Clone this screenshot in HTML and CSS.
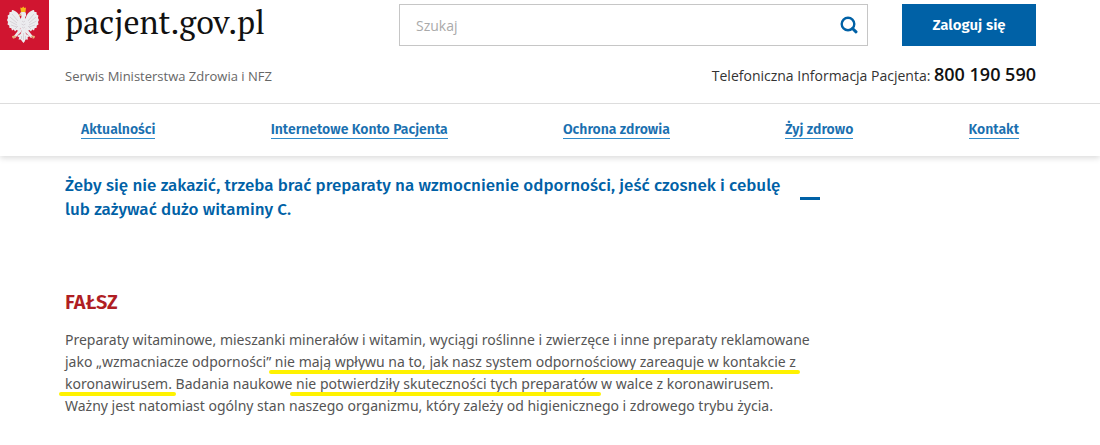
FILE: index.html
```html
<!DOCTYPE html>
<html lang="pl">
<head>
  <meta charset="UTF-8" />
  <title>pacjent.gov.pl</title>
  <meta name="viewport" content="width=device-width, initial-scale=1.0" />
  <link rel="stylesheet" href="styles.css">
</head>
<body>

  <header class="header">
    <div class="top-row">
      <a class="brand" href="#">
        <svg class="emblem" viewBox="0 0 49 50" aria-hidden="true">
          <rect width="49" height="50" fill="#d01530"/>
          <g fill="#ececef">
            <!-- wings -->
            <path d="M20.500 19C19.500 14 16 10.500 12 10L11.500 12L9.500 12L9.300 14.500L7.600 15.500L8 18L7 20L8 22L7.500 24.500L9.200 25.500L9.500 28L11.200 28L12 30.500L13.800 29.500L15 31.500L16.500 30L18.500 31L21 27Z"/>
            <path d="M25.500 19C26.500 14 30 10.500 34 10L34.500 12L36.500 12L36.700 14.500L38.400 15.500L38 18L39 20L38 22L38.500 24.500L36.800 25.500L36.500 28L34.800 28L34 30.500L32.200 29.500L31 31.500L29.500 30L27.500 31L25 27Z"/>
            <!-- head and body -->
            <path d="M20.500 12.500L23 11.500L25.800 12.500L26.200 15.500L25 17.500L26.500 20L27 25L25.500 30L23.500 32L21 30L19 25L19.500 20L21.300 17.500L21.500 15.500L19 15.500Z"/>
            <!-- legs and tail -->
            <path d="M20 28L22 31L18.500 34.500L15 38L13.500 36.500L17 32ZM26 28L24 31L27.500 34.500L31 38L33 36.500L29.500 32Z"/>
            <path d="M22 30L25 30L26 34L29.500 36L27.500 37.500L28 39.500L25.500 39.500L24.700 41.500L23.500 43L22.200 41.500L20.800 39.500L18.500 39.500L19.300 37.500L17 36L20.500 34Z"/>
          </g>
          <g fill="none" stroke="#c3b9c0" stroke-width=".5">
            <path d="M12 14L18 21M10 17L17 23M9.500 21L17 25M11 25L17 27M15 29L18 26"/>
            <path d="M34 14L28 21M36 17L29 23M36.500 21L29 25M35 25L29 27M31 29L28 26"/>
            <path d="M22 21L23.500 22L25 21M21.500 24L23.500 25L25.500 24M22 27L23.500 28L25 27M23.500 33V40M21.500 36V39M25.500 36V39"/>
          </g>
          <path d="M20.300 7.500L22 8L23.200 6.500L24.500 8L26 7.500L25.500 12L21 12Z" fill="#f6b91c"/>
          <path d="M19 14L21.500 13.500L21 15.500L19 16ZM12 36L15 35.500L16.500 37L14 37.500L14.500 39L12.500 38ZM35 36L32 35.500L30.500 37L33 37.500L32.500 39L34.500 38Z" fill="#e5b37c"/>
        </svg>
        <span class="brand-name">pacjent.gov.pl</span>
      </a>

      <form class="search">
        <input class="search-input" type="search" placeholder="Szukaj" aria-label="Szukaj">
        <button class="search-btn" type="button" aria-label="Wyszukaj">
          <svg viewBox="0 0 18 18" width="18" height="18" fill="none" stroke="#0061a6">
            <circle cx="8" cy="8" r="6.300" stroke-width="2.400"/>
            <path d="M12.500 12.500L16 15.800" stroke-width="3" stroke-linecap="round"/>
          </svg>
        </button>
      </form>

      <button class="login-btn" type="button">Zaloguj się</button>
    </div>

    <div class="info-row">
      <span class="ministry">Serwis Ministerstwa Zdrowia i NFZ</span>
      <span class="phone">Telefoniczna Informacja Pacjenta: <strong>800 190 590</strong></span>
    </div>

    <nav class="nav">
      <a href="#">Aktualności</a>
      <a href="#">Internetowe Konto Pacjenta</a>
      <a href="#">Ochrona zdrowia</a>
      <a href="#">Żyj zdrowo</a>
      <a href="#">Kontakt</a>
    </nav>
  </header>

  <main class="content">
    <button class="question" type="button" aria-expanded="true">
      <span>Żeby się nie zakazić, trzeba brać preparaty na wzmocnienie odporności, jeść czosnek i cebulę<br>lub zażywać dużo witaminy C.</span>
      <span class="minus"></span>
    </button>

    <section class="answer">
      <h2>FAŁSZ</h2>
      <p>
        Preparaty witaminowe, mieszanki minerałów i witamin, wyciągi roślinne i zwierzęce i inne preparaty reklamowane<br>
        jako „wzmacniacze odporności” <mark>nie mają wpływu na to, jak nasz system odpornościowy zareaguje w kontakcie z</mark><br>
        <mark>koronawirusem.</mark> Badania naukowe <mark>nie potwierdziły skuteczności tych preparatów</mark> w walce z koronawirusem.<br>
        Ważny jest natomiast ogólny stan naszego organizmu, który zależy od higienicznego i zdrowego trybu życia.
      </p>
    </section>
  </main>

</body>
</html>
```
FILE: styles.css
```css
* {
  box-sizing: border-box;
}

body {
  margin: 0;
  font-family: 'Open Sans', sans-serif;
  font-size: 14px;
  color: #555;
  background: #fff;
}

.header {
  box-shadow: 0 2px 6px rgba(0, 0, 0, 0.15);
}

.top-row {
  display: flex;
  align-items: flex-start;
  padding-right: 64px;
}

.brand {
  display: flex;
  gap: 16px;
  width: 399px;
  color: #111;
  text-decoration: none;
}

.emblem {
  width: 49px;
  height: 50px;
}

.brand-name {
  font-family: 'PT Serif', 'Liberation Serif', serif;
  font-size: 32px;
  line-height: 44px;
}

.search {
  display: flex;
  flex: 1;
  height: 42px;
  margin-top: 4px;
  border: 1px solid #c6c6c6;
}

.search-input {
  flex: 1;
  min-width: 0;
  padding: 0 16px;
  border: none;
  outline: none;
  background: none;
  font: inherit;
}

.search-input::placeholder {
  color: #aaa;
}

.search-btn {
  display: flex;
  align-items: center;
  padding: 0 9px;
  border: none;
  background: none;
  cursor: pointer;
}

.login-btn {
  width: 134px;
  height: 42px;
  margin: 4px 0 0 34px;
  border: none;
  background: #0061a6;
  color: #fff;
  font-family: 'Fira Sans', 'Noto Sans', sans-serif;
  font-size: 15px;
  font-weight: 600;
  cursor: pointer;
}

.info-row {
  display: flex;
  justify-content: space-between;
  align-items: baseline;
  padding: 12px 64px 14px 65px;
  line-height: 25px;
}

.ministry {
  font-size: 13px;
  color: #666;
}

.phone {
  color: #333;
}

.phone strong {
  color: #111;
  font-size: 18px;
  font-weight: 600;
}

.nav {
  display: flex;
  justify-content: space-between;
  padding: 17px 81px;
  border-top: 1px solid #ddd;
}

.nav a {
  border-bottom: 1px solid #2f8bc9;
  color: #1a70b0;
  font-family: 'Fira Sans', 'Noto Sans', sans-serif;
  font-size: 14px;
  font-weight: 600;
  line-height: 17px;
  text-decoration: none;
}

.content {
  padding: 18px 65px 28px;
}

.question {
  display: flex;
  align-items: center;
  gap: 20px;
  padding: 0;
  border: none;
  background: none;
  color: #0061a6;
  font-family: 'Fira Sans', 'Noto Sans', sans-serif;
  font-size: 17px;
  font-weight: 500;
  line-height: 24px;
  text-align: left;
  cursor: pointer;
}

.minus {
  width: 20px;
  height: 3px;
  background: #0061a6;
}

.answer {
  margin-top: 68px;
}

.answer h2 {
  margin: 0 0 15px;
  color: #b01e23;
  font-family: 'Fira Sans', 'Noto Sans', sans-serif;
  font-size: 20px;
  font-weight: 600;
  line-height: 24px;
}

.answer p {
  margin: 0;
  font-family: 'Noto Sans', 'Open Sans', sans-serif;
  line-height: 22px;
}

/* marker strokes under the key phrases */
mark {
  position: relative;
  background: none;
  color: inherit;
}

mark::after {
  content: '';
  position: absolute;
  left: -6px;
  right: -4px;
  bottom: -3px;
  height: 4px;
  border-radius: 2px;
  background: #fff200;
}
```
